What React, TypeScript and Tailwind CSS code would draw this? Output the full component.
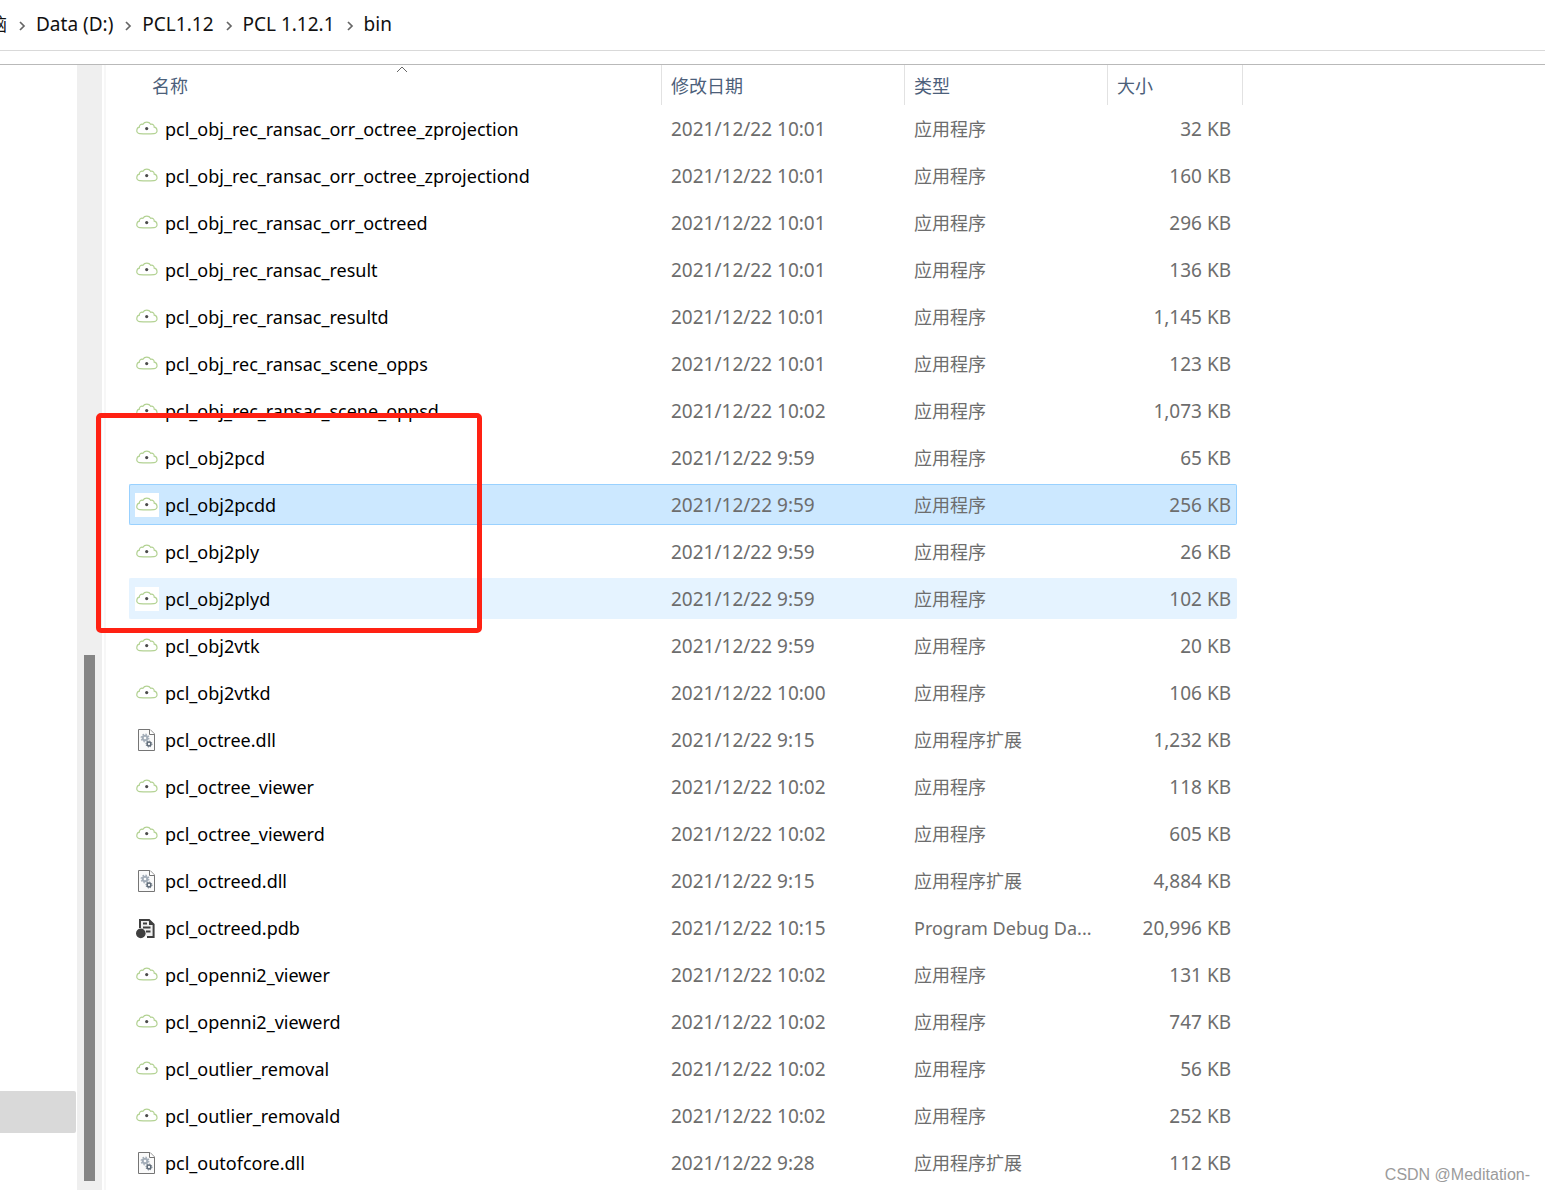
import React from "react";

type Kind = "app" | "dll" | "pdb";
type State = "selected" | "hover" | "plain";

interface FileEntry {
  name: string;
  date: string;
  kind: Kind;
  size: string;
  state?: State;
}

const files: FileEntry[] = [
  { name: "pcl_obj_rec_ransac_orr_octree_zprojection", date: "2021/12/22 10:01", kind: "app", size: "32 KB" },
  { name: "pcl_obj_rec_ransac_orr_octree_zprojectiond", date: "2021/12/22 10:01", kind: "app", size: "160 KB" },
  { name: "pcl_obj_rec_ransac_orr_octreed", date: "2021/12/22 10:01", kind: "app", size: "296 KB" },
  { name: "pcl_obj_rec_ransac_result", date: "2021/12/22 10:01", kind: "app", size: "136 KB" },
  { name: "pcl_obj_rec_ransac_resultd", date: "2021/12/22 10:01", kind: "app", size: "1,145 KB" },
  { name: "pcl_obj_rec_ransac_scene_opps", date: "2021/12/22 10:01", kind: "app", size: "123 KB" },
  { name: "pcl_obj_rec_ransac_scene_oppsd", date: "2021/12/22 10:02", kind: "app", size: "1,073 KB" },
  { name: "pcl_obj2pcd", date: "2021/12/22 9:59", kind: "app", size: "65 KB" },
  { name: "pcl_obj2pcdd", date: "2021/12/22 9:59", kind: "app", size: "256 KB", state: "selected" },
  { name: "pcl_obj2ply", date: "2021/12/22 9:59", kind: "app", size: "26 KB" },
  { name: "pcl_obj2plyd", date: "2021/12/22 9:59", kind: "app", size: "102 KB", state: "hover" },
  { name: "pcl_obj2vtk", date: "2021/12/22 9:59", kind: "app", size: "20 KB" },
  { name: "pcl_obj2vtkd", date: "2021/12/22 10:00", kind: "app", size: "106 KB" },
  { name: "pcl_octree.dll", date: "2021/12/22 9:15", kind: "dll", size: "1,232 KB" },
  { name: "pcl_octree_viewer", date: "2021/12/22 10:02", kind: "app", size: "118 KB" },
  { name: "pcl_octree_viewerd", date: "2021/12/22 10:02", kind: "app", size: "605 KB" },
  { name: "pcl_octreed.dll", date: "2021/12/22 9:15", kind: "dll", size: "4,884 KB" },
  { name: "pcl_octreed.pdb", date: "2021/12/22 10:15", kind: "pdb", size: "20,996 KB" },
  { name: "pcl_openni2_viewer", date: "2021/12/22 10:02", kind: "app", size: "131 KB" },
  { name: "pcl_openni2_viewerd", date: "2021/12/22 10:02", kind: "app", size: "747 KB" },
  { name: "pcl_outlier_removal", date: "2021/12/22 10:02", kind: "app", size: "56 KB" },
  { name: "pcl_outlier_removald", date: "2021/12/22 10:02", kind: "app", size: "252 KB" },
  { name: "pcl_outofcore.dll", date: "2021/12/22 9:28", kind: "dll", size: "112 KB" },
];

const band: Record<State, string> = {
  selected: "border-[#99d1ff] bg-[#cce8ff]",
  hover: "border-[#e5f3ff] bg-[#e5f3ff]",
  plain: "border-transparent",
};

function CloudIcon() {
  return (
    <svg viewBox="0 0 24 24" className="size-6 shrink-0 bg-white" fill="none" aria-hidden="true">
      <path
        d="M4.6 16.6C2.6 16.4 1.6 15 1.8 13.2C2 11.6 3 10.4 4.4 10.2C4.2 8.2 5.6 6.9 7.8 7.3C8.8 5.8 10.2 5.2 11.8 5.2C13.4 5.2 14.8 5.8 15.7 7.3C18 6.9 19.4 8.2 19.2 10.2C20.8 10.4 21.8 11.6 22 13.2C22.2 15 21.3 16.4 19.2 16.6C14.5 17 9.3 17 4.6 16.6Z"
        stroke="#b3d293"
        strokeWidth="1.2"
      />
      <circle cx="11.7" cy="11.6" r="1.6" fill="#4a4a4a" />
    </svg>
  );
}

function DllIcon() {
  return (
    <svg viewBox="0 0 24 24" className="size-6 shrink-0" fill="none" aria-hidden="true">
      <path d="M3.5 1.5H15L19.5 6V22.5H3.5Z" fill="#fafafa" stroke="#757575" />
      <path d="M14.5 1.5V6.5H19.5" fill="#fff" stroke="#757575" />
      <circle cx="10" cy="10" r="2.3" stroke="#a3adb8" strokeWidth="2" />
      <circle cx="10" cy="10" r="3.8" stroke="#a3adb8" strokeWidth="1.3" strokeDasharray="1.5 1.48" />
      <circle cx="14" cy="16" r="1.9" stroke="#5f6b78" strokeWidth="1.5" />
      <circle cx="14" cy="16" r="3" stroke="#5f6b78" strokeWidth="0.9" strokeDasharray="1.2 1.15" />
    </svg>
  );
}

function PdbIcon() {
  return (
    <svg viewBox="0 0 24 24" className="size-6 shrink-0" fill="none" aria-hidden="true">
      <path d="M5 12V4H14L18.6 8.5V21H12" fill="#f0f0f0" stroke="#3f3f3f" strokeWidth="2" />
      <path d="M14 3.5V9H19" fill="#3f3f3f" />
      <path d="M8 7.5H12M8 11.5H15.5M11 15.5H15.5" stroke="#3f3f3f" strokeWidth="1.8" />
      <circle cx="5.8" cy="17.4" r="4.8" fill="#3f3f3f" />
    </svg>
  );
}

const icons: Record<Kind, React.ReactElement> = {
  app: <CloudIcon />,
  dll: <DllIcon />,
  pdb: <PdbIcon />,
};

const typeLabels: Record<Kind, string> = {
  app: "应用程序",
  dll: "应用程序扩展",
  pdb: "Program Debug Da...",
};

function Chevron() {
  return (
    <svg viewBox="0 0 8 10" className="mt-1 mr-[10px] ml-[11px] h-[10px] w-2 shrink-0" fill="none" aria-hidden="true">
      <path d="M2 1L6 5L2 9" stroke="#666" strokeWidth="1.7" />
    </svg>
  );
}

const crumbs = ["Data (D:)", "PCL1.12", "PCL 1.12.1", "bin"];

function Breadcrumbs() {
  return (
    <nav aria-label="路径" className="flex h-[51px] items-center border-b border-[#d9d9d9] pb-[2px] text-[#111]">
      <a href="#pc" className="flex w-[7px] shrink-0 justify-end overflow-hidden text-[18px]">
        脑
      </a>
      {crumbs.map((crumb) => (
        <React.Fragment key={crumb}>
          <Chevron />
          <a href="#folder" className="whitespace-nowrap">
            {crumb}
          </a>
        </React.Fragment>
      ))}
    </nav>
  );
}

function Heading({ label, first = false }: { label: string; first?: boolean }) {
  return (
    <th scope="col" className="h-10 border-r border-[#e2e2e2] p-0 pt-[2px] text-left font-normal">
      <button
        type="button"
        className={
          first
            ? "relative ml-[14px] block w-[517px] pl-[9px] text-left text-[18px] text-[#4c607a]"
            : "block w-full pl-[9px] text-left text-[18px] text-[#4c607a]"
        }
      >
        {label}
        {first && (
          <svg viewBox="0 0 12 7" className="absolute -top-2 left-1/2 h-[7px] w-3 -translate-x-1/2" fill="none" aria-hidden="true">
            <path d="M1 6L6 1L11 6" stroke="#666" />
          </svg>
        )}
      </button>
    </th>
  );
}

function Row({ file }: { file: FileEntry }) {
  const state = file.state ?? "plain";
  const cell = `flex h-[41px] items-center border-y whitespace-nowrap ${band[state]}`;
  return (
    <tr aria-selected={state === "selected"}>
      <td className="px-0 py-[3px]">
        <div className={`${cell} gap-[6px] rounded-l-xs border-l pl-[5px] text-[18px] text-black`}>
          {icons[file.kind]}
          {file.name}
        </div>
      </td>
      <td className="px-0 py-[3px]">
        <div className={`${cell} pl-[9px]`}>{file.date}</div>
      </td>
      <td className="px-0 py-[3px]">
        <div className={`${cell} pl-[9px] text-[18px]`}>{typeLabels[file.kind]}</div>
      </td>
      <td className="py-[3px] pr-[6px] pl-0">
        <div className={`${cell} justify-end rounded-r-xs border-r pr-[5px]`}>{file.size}</div>
      </td>
    </tr>
  );
}

export default function App() {
  return (
    <div
      lang="zh-CN"
      className="relative flex min-h-screen flex-col overflow-hidden bg-white font-['Noto_Sans','Noto_Sans_CJK_SC',sans-serif] text-[19px] leading-6"
    >
      <Breadcrumbs />
      <div className="mt-[13px] flex grow border-t border-[#b9b9b9]">
        <aside className="flex w-[77px] shrink-0 flex-col justify-end pr-px pb-[57px]">
          <div className="h-[42px] rounded-r-xs bg-[#d9d9d9]" />
        </aside>
        <div className="flex w-[25px] shrink-0 flex-col items-center justify-end bg-[#efefef] pr-px pb-[9px]">
          <div className="h-[526px] w-[11px] bg-[#858585]" />
        </div>
        <main className="relative ml-[2px] grow border-l-2 border-[#f7f7f7] pl-[23px]">
          <table className="w-[1114px] table-fixed border-separate border-spacing-0 text-[#6d6d6d]">
            <colgroup>
              <col className="w-[533px]" />
              <col className="w-[243px]" />
              <col className="w-[203px]" />
              <col className="w-[135px]" />
            </colgroup>
            <thead>
              <tr>
                <Heading label="名称" first />
                <Heading label="修改日期" />
                <Heading label="类型" />
                <Heading label="大小" />
              </tr>
            </thead>
            <tbody>
              {files.map((file) => (
                <Row key={file.name} file={file} />
              ))}
            </tbody>
          </table>
          <div className="pointer-events-none absolute top-[348px] -left-[10px] h-[220px] w-[386px] rounded-[5px] border-5 border-[#ff2113]" />
        </main>
      </div>
      <div className="absolute right-[15px] bottom-[3px] font-['Liberation_Sans',sans-serif] text-base text-[#9b9b9b]">
        CSDN @Meditation-
      </div>
    </div>
  );
}
